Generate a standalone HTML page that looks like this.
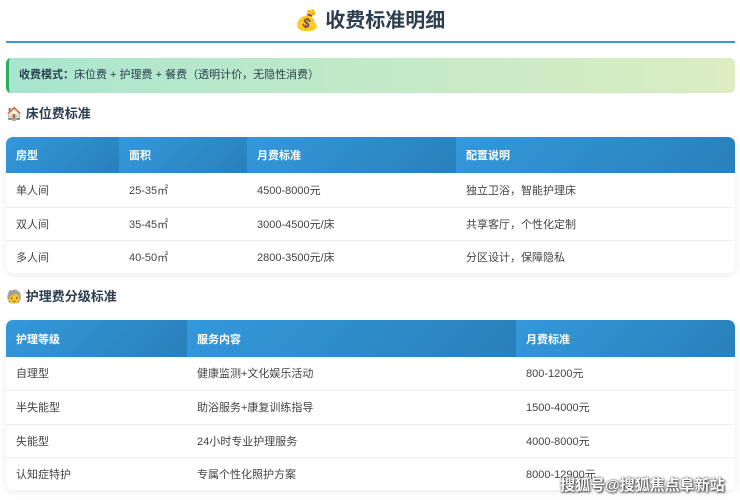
<!DOCTYPE html>
<html><head><meta charset="utf-8"><style>
*{margin:0;padding:0;box-sizing:border-box}
body{width:740px;height:500px;background:#fff;font-family:"Liberation Sans","Noto Sans CJK SC",sans-serif;color:#333;position:relative;overflow:hidden}
.title{position:absolute;top:6px;left:0;width:740px;text-align:center;font-size:20px;font-weight:bold;color:#2c3e50;line-height:30px}
.line{position:absolute;top:41px;left:6px;width:729px;height:2px;background:#3498db}
.info{position:absolute;top:58px;left:6px;width:729px;height:35px;border-radius:5px;border-left:3px solid #27ae60;background:linear-gradient(90deg,#a8e6cf,#dcedc1);font-size:11px;line-height:35px;padding-left:10px;color:#2c3e50}
.sec{position:absolute;left:6px;font-size:13px;font-weight:bold;color:#2c3e50;line-height:18px}
table{position:absolute;left:6px;width:729px;border-collapse:collapse;font-size:11px;border-radius:7px;overflow:hidden;box-shadow:0 2px 8px rgba(0,0,0,0.08)}
th{background:linear-gradient(135deg,#3498db,#2980b9);color:#fff;text-align:left;font-weight:bold;padding-left:10px}
td{padding-left:10px;border-bottom:1px solid #eee;color:#444}
tr:last-child td{border-bottom:none}
.wm{position:absolute;left:560px;top:474px;font-size:15px;color:#fff;font-weight:bold;text-shadow:0 0 2px #333,1px 1px 2px #333}
</style></head><body>
<div class="title">💰 收费标准明细</div>
<div class="line"></div>
<div class="info"><b>收费模式：</b>床位费 + 护理费 + 餐费（透明计价，无隐性消费）</div>
<div class="sec" style="top:105px">🏠 床位费标准</div>
<table style="top:137px">
<tr style="height:36px"><th style="width:113px">房型</th><th style="width:128px">面积</th><th style="width:209px">月费标准</th><th>配置说明</th></tr>
<tr style="height:34px"><td>单人间</td><td>25-35㎡</td><td>4500-8000元</td><td>独立卫浴，智能护理床</td></tr>
<tr style="height:33px"><td>双人间</td><td>35-45㎡</td><td>3000-4500元/床</td><td>共享客厅，个性化定制</td></tr>
<tr style="height:33px"><td>多人间</td><td>40-50㎡</td><td>2800-3500元/床</td><td>分区设计，保障隐私</td></tr>
</table>
<div class="sec" style="top:288px">🧓 护理费分级标准</div>
<table style="top:320px">
<tr style="height:37px"><th style="width:181px">护理等级</th><th style="width:329px">服务内容</th><th>月费标准</th></tr>
<tr style="height:33px"><td>自理型</td><td>健康监测+文化娱乐活动</td><td>800-1200元</td></tr>
<tr style="height:34px"><td>半失能型</td><td>助浴服务+康复训练指导</td><td>1500-4000元</td></tr>
<tr style="height:33px"><td>失能型</td><td>24小时专业护理服务</td><td>4000-8000元</td></tr>
<tr style="height:33px"><td>认知症特护</td><td>专属个性化照护方案</td><td>8000-12900元</td></tr>
</table>
<div class="wm">搜狐号@搜狐焦点阜新站</div>
</body></html>
